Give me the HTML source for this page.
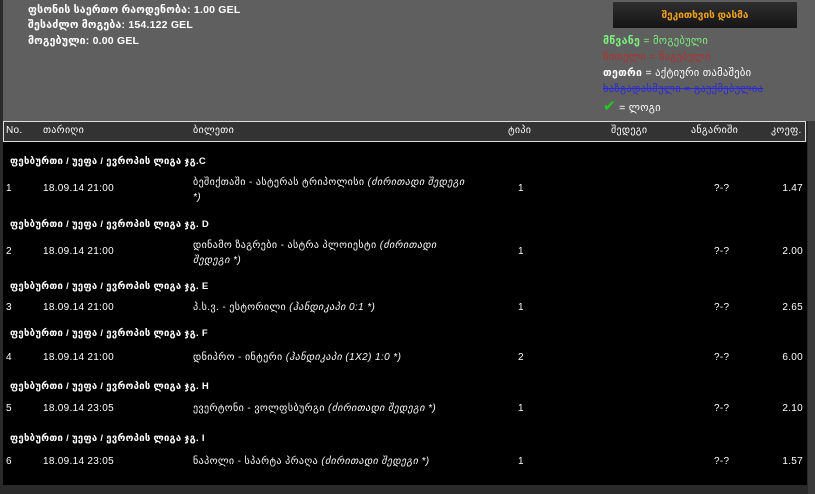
<!DOCTYPE html>
<html><head><meta charset="utf-8"><style>
body{margin:0;width:815px;height:494px;background:#2a2a2a;overflow:hidden;font-family:"Liberation Sans","DejaVu Sans",sans-serif;color:#fff;font-size:10px;position:relative}
.top{position:absolute;left:3px;top:0;width:812px;height:121px;background:#5f5f5f}
.side{position:absolute;left:808px;top:121px;width:7px;height:373px;background:#3a3a3a}
.body{position:absolute;left:3px;top:142px;width:804px;height:343px;background:#000}
.hdr{position:absolute;left:3px;top:121px;width:801px;height:19px;border:1.5px solid #ddd;background:#333}
.a{position:absolute;white-space:nowrap;letter-spacing:0.3px}
.g{font-weight:bold;font-size:9.5px}
.btn{position:absolute;left:613px;top:2px;width:184px;height:26px;background:linear-gradient(#2e2e2e,#151515);color:#f0a020;font-size:10px;text-align:center;line-height:28px;font-weight:bold}
.t{position:absolute;left:193px;width:300px;line-height:15px;font-size:10px;letter-spacing:0.4px}
i{font-style:italic}
.tp{font-size:10.5px;font-weight:bold;letter-spacing:0.2px}
</style></head><body>
<div class="top"></div><div class="side"></div>
<div class="a tp" style="left:28px;top:4px">ფსონის საერთო რაოდენობა: 1.00 GEL</div>
<div class="a tp" style="left:28px;top:19px">შესაძლო მოგება: 154.122 GEL</div>
<div class="a tp" style="left:28px;top:35px">მოგებული: 0.00 GEL</div>
<div class="btn">შეკითხვის დასმა</div>
<div class="a" style="left:603px;top:35px;color:#7df07d;font-size:10.5px"><b>მწვანე</b> = მოგებული</div>
<div class="a" style="left:603px;top:51px;color:#b03030;font-size:10.5px">წითელი = წაგებული</div>
<div class="a" style="left:603px;top:67px;font-size:10.5px"><b>თეთრი</b> = აქტიური თამაშები</div>
<div class="a" style="left:603px;top:83px;color:#2a2ad8;font-size:10.5px;text-decoration:line-through">ხაზგადასმული = გაუქმებულია</div>
<div class="a" style="left:603px;top:97px;font-size:10.5px"><span style="color:#22cc22;font-size:15px;font-weight:bold">✔</span> = ლოგი</div>
<div class="body"></div>
<div class="hdr"></div>
<div class="a" style="left:6px;top:125px">No.</div>
<div class="a" style="left:43px;top:125px">თარიღი</div>
<div class="a" style="left:193px;top:125px">ბილეთი</div>
<div class="a" style="left:508px;top:125px">ტიპი</div>
<div class="a" style="left:611px;top:125px">შედეგი</div>
<div class="a" style="left:691px;top:125px">ანგარიში</div>
<div class="a" style="left:771px;top:125px">კოეფ.</div>

<div class="a g" style="left:10px;top:156px">ფეხბურთი / უეფა / ევროპის ლიგა ჯგ.C</div>
<div class="a" style="left:6px;top:183px">1</div><div class="a" style="left:43px;top:183px">18.09.14 21:00</div>
<div class="t" style="top:175px">ბეშიქთაში - ასტერას ტრიპოლისი <i>(ძირითადი შედეგი<br>*)</i></div>
<div class="a" style="left:518px;top:183px">1</div><div class="a" style="left:714px;top:183px">?-?</div><div class="a" style="right:12px;top:183px">1.47</div>

<div class="a g" style="left:10px;top:219px">ფეხბურთი / უეფა / ევროპის ლიგა ჯგ. D</div>
<div class="a" style="left:6px;top:246px">2</div><div class="a" style="left:43px;top:246px">18.09.14 21:00</div>
<div class="t" style="top:238px">დინამო ზაგრები - ასტრა პლოიესტი <i>(ძირითადი<br>შედეგი *)</i></div>
<div class="a" style="left:518px;top:246px">1</div><div class="a" style="left:714px;top:246px">?-?</div><div class="a" style="right:12px;top:246px">2.00</div>

<div class="a g" style="left:10px;top:281px">ფეხბურთი / უეფა / ევროპის ლიგა ჯგ. E</div>
<div class="a" style="left:6px;top:302px">3</div><div class="a" style="left:43px;top:302px">18.09.14 21:00</div>
<div class="t" style="top:300px">პ.ს.ვ. - ესტორილი <i>(ჰანდიკაპი 0:1 *)</i></div>
<div class="a" style="left:518px;top:302px">1</div><div class="a" style="left:714px;top:302px">?-?</div><div class="a" style="right:12px;top:302px">2.65</div>

<div class="a g" style="left:10px;top:328px">ფეხბურთი / უეფა / ევროპის ლიგა ჯგ. F</div>
<div class="a" style="left:6px;top:352px">4</div><div class="a" style="left:43px;top:352px">18.09.14 21:00</div>
<div class="t" style="top:350px">დნიპრო - ინტერი <i>(ჰანდიკაპი (1X2) 1:0 *)</i></div>
<div class="a" style="left:518px;top:352px">2</div><div class="a" style="left:714px;top:352px">?-?</div><div class="a" style="right:12px;top:352px">6.00</div>

<div class="a g" style="left:10px;top:381px">ფეხბურთი / უეფა / ევროპის ლიგა ჯგ. H</div>
<div class="a" style="left:6px;top:403px">5</div><div class="a" style="left:43px;top:403px">18.09.14 23:05</div>
<div class="t" style="top:401px">ევერტონი - ვოლფსბურგი <i>(ძირითადი შედეგი *)</i></div>
<div class="a" style="left:518px;top:403px">1</div><div class="a" style="left:714px;top:403px">?-?</div><div class="a" style="right:12px;top:403px">2.10</div>

<div class="a g" style="left:10px;top:433px">ფეხბურთი / უეფა / ევროპის ლიგა ჯგ. I</div>
<div class="a" style="left:6px;top:456px">6</div><div class="a" style="left:43px;top:456px">18.09.14 23:05</div>
<div class="t" style="top:454px">ნაპოლი - სპარტა პრაღა <i>(ძირითადი შედეგი *)</i></div>
<div class="a" style="left:518px;top:456px">1</div><div class="a" style="left:714px;top:456px">?-?</div><div class="a" style="right:12px;top:456px">1.57</div>
</body></html>
